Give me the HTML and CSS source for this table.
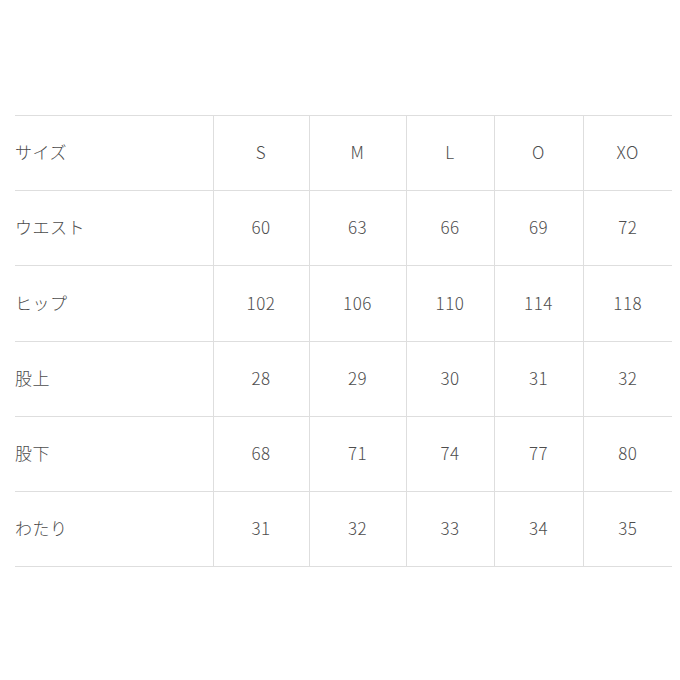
FILE: index.html
```html
<!DOCTYPE html>
<html lang="ja">
<head>
<meta charset="utf-8">
<link rel="stylesheet" href="styles.css">
</head>
<body>
<table class="size-table">
  <colgroup>
    <col class="c-label"><col class="c1"><col class="c2"><col class="c3"><col class="c4"><col class="c5">
  </colgroup>
  <tr class="r75"><th>サイズ</th><td>S</td><td>M</td><td>L</td><td>O</td><td>XO</td></tr>
  <tr class="r75"><th>ウエスト</th><td>60</td><td>63</td><td>66</td><td>69</td><td>72</td></tr>
  <tr class="r76"><th>ヒップ</th><td>102</td><td>106</td><td>110</td><td>114</td><td>118</td></tr>
  <tr class="r75"><th>股上</th><td>28</td><td>29</td><td>30</td><td>31</td><td>32</td></tr>
  <tr class="r75"><th>股下</th><td>68</td><td>71</td><td>74</td><td>77</td><td>80</td></tr>
  <tr class="r75"><th>わたり</th><td>31</td><td>32</td><td>33</td><td>34</td><td>35</td></tr>
</table>
</body>
</html>
```
FILE: styles.css
```css
html, body {
  margin: 0;
  padding: 0;
  background: #fff;
}
body {
  padding: 115px 0 0 15px;
  font-family: "Noto Sans CJK JP", "Noto Sans", sans-serif;
  font-weight: 300;
  color: #4d4d4d;
  font-size: 17px;
  letter-spacing: 0.5px;
}
.size-table {
  border-collapse: collapse;
  table-layout: fixed;
  width: 657px;
}
.c-label { width: 198px; }
.c1 { width: 96px; }
.c2 { width: 97px; }
.c3 { width: 88px; }
.c4 { width: 89px; }
.c5 { width: 89px; }
.size-table tr {
  border-top: 1px solid #dedede;
  border-bottom: 1px solid #dedede;
}
.r75 { height: 75px; }
.r76 { height: 76px; }
.size-table th {
  text-align: left;
  font-weight: 300;
  padding: 0 0 3px 0;
}
.size-table td {
  text-align: center;
  padding: 0 0 3px 0;
  border-left: 1px solid #dedede;
}
```
